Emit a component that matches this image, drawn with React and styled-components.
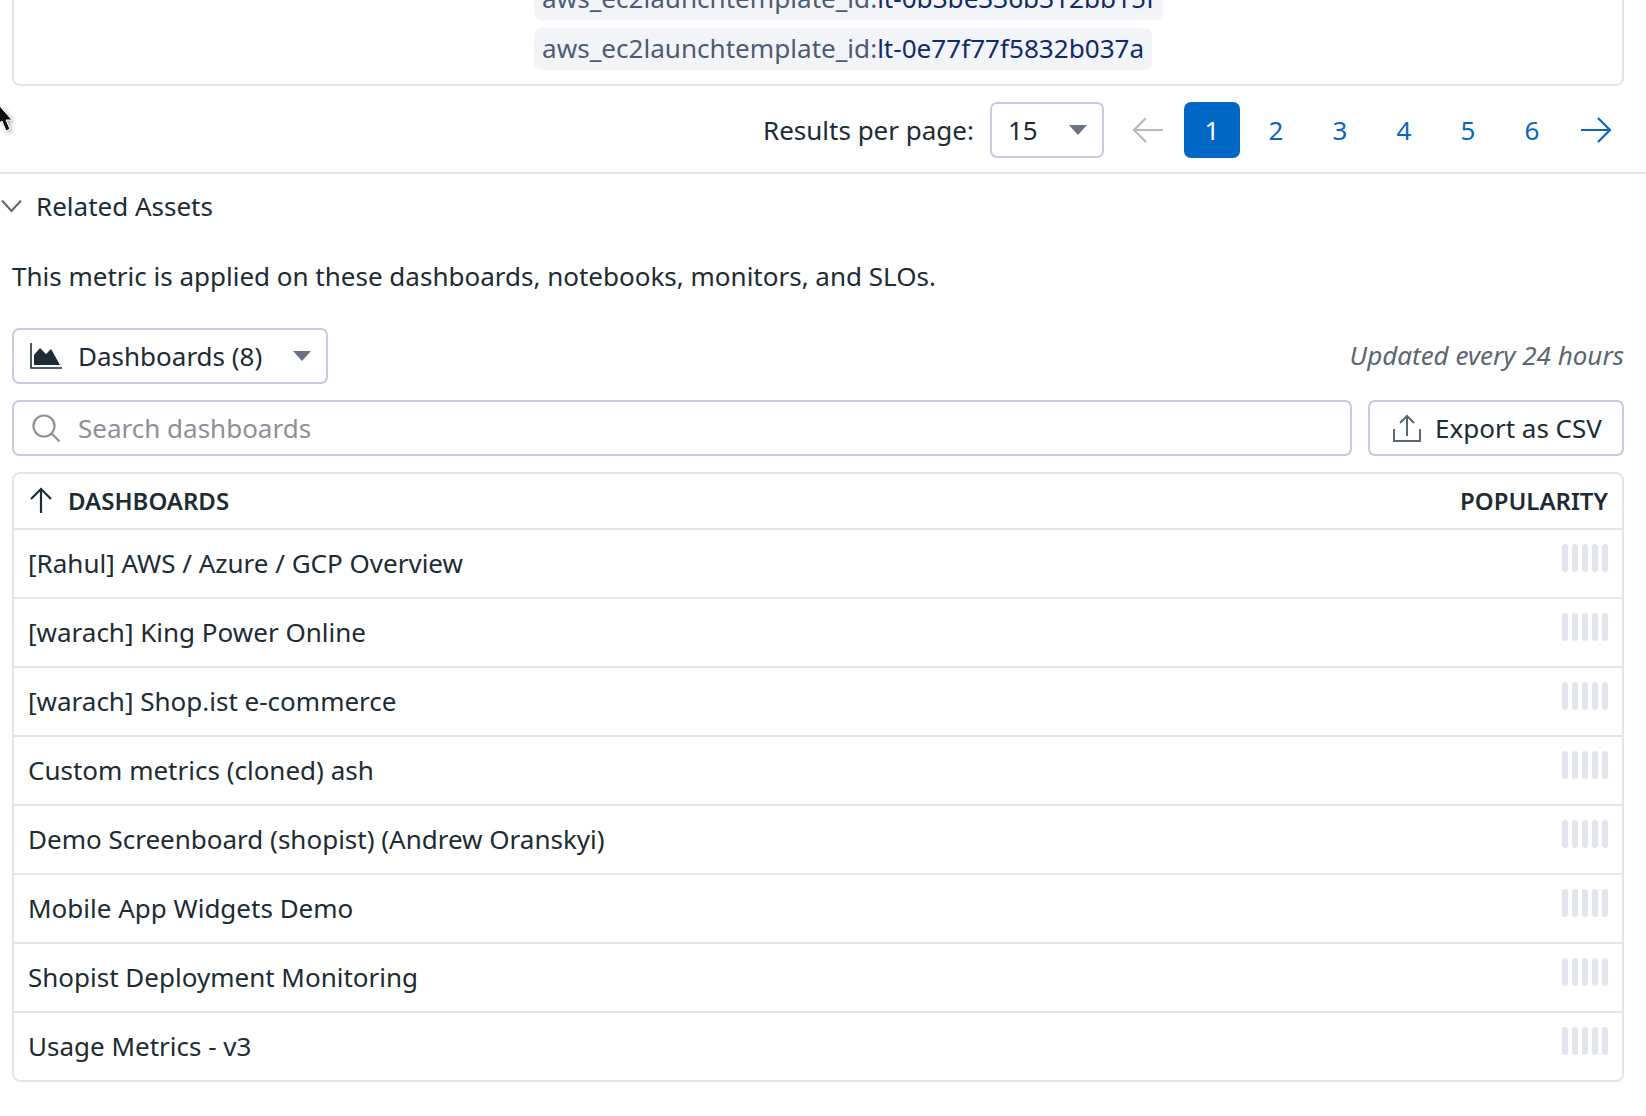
import React from "react"
import styled, { createGlobalStyle } from "styled-components"

const GlobalStyle = createGlobalStyle`
  html, body {
    margin: 0;
    padding: 0;
    background: #fff;
    overflow: hidden;
  }
  body {
    font-family: "Noto Sans", "Open Sans", sans-serif;
    color: #1c2b34;
    font-size: 26px;
  }
`
const Page = styled.div`
  position: relative;
  width: 1646px;
  height: 1116px;
  overflow: hidden;
`
const TagCard = styled.div`
  box-sizing: border-box;
  height: 116px;
  margin: -30px 22px 0 12px;
  padding: 0 0 14px 520px;
  border: 2px solid #e2e5ed;
  border-top: 0;
  border-radius: 0 0 8px 8px;
  display: flex;
  flex-direction: column;
  justify-content: flex-end;
  align-items: flex-start;
  gap: 8px;
`
const Chip = styled.div`
  box-sizing: border-box;
  flex-shrink: 0;
  height: 42px;
  padding: 0 8px 2px;
  display: flex;
  align-items: center;
  background: #f3f4f7;
  border-radius: 7px;
  font-size: 26.1px;
  white-space: nowrap;
  color: #4f5b73;

  b {
    font-weight: 400;
    color: #12296b;
  }
`
const Pagination = styled.div`
  height: 88px;
  padding: 16px 22px 0 0;
  box-sizing: border-box;
  display: flex;
  align-items: flex-start;
  justify-content: flex-end;
  border-bottom: 2px solid #e2e5ed;
`
const PerPage = styled.span`
  line-height: 56px;
  margin-right: 16px;
`
const SelectBox = styled.div`
  box-sizing: border-box;
  height: 56px;
  display: flex;
  align-items: center;
  gap: 16px;
  padding: 0 15px 0 16px;
  border: 2px solid #c7cbdf;
  border-radius: 7px;
  background: #fff;
`
const PageSize = styled(SelectBox)`
  width: 114px;
`
const Caret = styled.span`
  width: 0;
  height: 0;
  margin-left: auto;
  border-left: 9px solid transparent;
  border-right: 9px solid transparent;
  border-top: 10px solid #6b7280;
`
const Pages = styled.div`
  display: flex;
  align-items: center;
  margin-left: 8px;
`
const PageItem = styled.div`
  width: 56px;
  height: 56px;
  margin-left: 8px;
  display: flex;
  align-items: center;
  justify-content: center;
  border-radius: 7px;
  color: ${props => (props.$active ? "#fff" : "#0a66bd")};
  background: ${props => (props.$active ? "#0068c4" : "transparent")};
`
const Section = styled.section`
  padding: 0 22px 0 12px;
`
const SectionHead = styled.div`
  height: 64px;
  margin-left: -12px;
  display: flex;
  align-items: center;
  gap: 13px;
`
const Description = styled.p`
  margin: 0;
  padding-top: 20px;
  line-height: 37px;
`
const SwitchRow = styled.div`
  margin-top: 33px;
  display: flex;
  align-items: center;
  justify-content: space-between;
`
const TypeSelect = styled(SelectBox)`
  width: 316px;
`
const Updated = styled.span`
  margin-bottom: 2px;
  font-style: italic;
  color: #5c6670;
`
const SearchRow = styled.div`
  margin-top: 16px;
  display: flex;
  gap: 16px;
`
const SearchBox = styled(SelectBox)`
  flex: 1;
  padding-left: 17px;
  gap: 17px;
  color: #8b9197;
`
const ExportButton = styled(SelectBox)`
  width: 256px;
  padding-left: 23px;
  gap: 14px;
`
const Table = styled.div`
  margin-top: 16px;
  border: 2px solid #e2e5ed;
  border-radius: 8px;
`
const HeadRow = styled.div`
  box-sizing: border-box;
  height: 54px;
  padding: 0 14px 2px 15px;
  display: flex;
  align-items: center;
  justify-content: space-between;
  font-size: 24px;
  font-weight: 600;
`
const HeadCell = styled.div`
  display: flex;
  align-items: center;
  gap: 15px;
`
const Row = styled.div`
  box-sizing: border-box;
  height: 69px;
  padding: 0 14px 2px;
  display: flex;
  align-items: center;
  justify-content: space-between;
  border-top: 2px solid #e2e5ed;
`
const Bars = styled.div`
  display: flex;
  gap: 4px;
  margin-top: -10px;
`
const Bar = styled.span`
  width: 6px;
  height: 28px;
  border-radius: 3px;
  background: #e2e5ed;
`
const Cursor = styled.svg`
  position: absolute;
  left: 0;
  top: 104px;
  filter: drop-shadow(2px 2px 2px rgba(0, 0, 0, 0.3));
`

const rows = [
  "[Rahul] AWS / Azure / GCP Overview",
  "[warach] King Power Online",
  "[warach] Shop.ist e-commerce",
  "Custom metrics (cloned) ash",
  "Demo Screenboard (shopist) (Andrew Oranskyi)",
  "Mobile App Widgets Demo",
  "Shopist Deployment Monitoring",
  "Usage Metrics - v3",
]

const Arrow = ({ dir, color }) => (
  <svg width="32" height="32" viewBox="0 0 32 32" fill="none" stroke={color} strokeWidth="2.2">
    {dir === "left"
      ? <path d="M31 16H2M14 4L2 16l12 12" />
      : <path d="M1 16h29M18 4l12 12-12 12" />}
  </svg>
)

export default function App() {
  return (
    <Page>
      <GlobalStyle />
      <TagCard>
        <Chip>aws_ec2launchtemplate_id:<b>lt-0b3be336b312bb15f</b></Chip>
        <Chip>aws_ec2launchtemplate_id:<b>lt-0e77f77f5832b037a</b></Chip>
      </TagCard>
      <Pagination>
        <PerPage>Results per page:</PerPage>
        <PageSize>15<Caret /></PageSize>
        <Pages>
          <PageItem><Arrow dir="left" color="#b5b8bd" /></PageItem>
          <PageItem $active>1</PageItem>
          {[2, 3, 4, 5, 6].map(n => <PageItem key={n}>{n}</PageItem>)}
          <PageItem><Arrow dir="right" color="#0a66bd" /></PageItem>
        </Pages>
      </Pagination>
      <Section>
        <SectionHead>
          <svg width="23" height="14" viewBox="0 0 23 14" fill="none" stroke="#5c6670" strokeWidth="2">
            <path d="M2 1.5l9.500 10.500 9.500-10.500" />
          </svg>
          Related Assets
        </SectionHead>
        <Description>This metric is applied on these dashboards, notebooks, monitors, and SLOs.</Description>
        <SwitchRow>
          <TypeSelect>
            <svg width="32" height="26" viewBox="0 0 32 26">
              <path d="M1 0v25h31" fill="none" stroke="#1c2b34" strokeWidth="1.600" />
              <path d="M4 22V12l6-7 6 6 5-5 9 16z" fill="#1c2b34" />
            </svg>
            Dashboards (8)
            <Caret />
          </TypeSelect>
          <Updated>Updated every 24 hours</Updated>
        </SwitchRow>
        <SearchRow>
          <SearchBox>
            <svg width="30" height="30" viewBox="0 0 30 30" fill="none" stroke="#8b9197" strokeWidth="2.200">
              <circle cx="13" cy="13" r="10.500" />
              <path d="M20.500 20.500l8 8" />
            </svg>
            Search dashboards
          </SearchBox>
          <ExportButton>
            <svg width="28" height="28" viewBox="0 0 28 28" fill="none" stroke="#5c6670" strokeWidth="2">
              <path d="M1 15v12h26V15M14 22V2M7 9l7-7 7 7" />
            </svg>
            Export as CSV
          </ExportButton>
        </SearchRow>
        <Table>
          <HeadRow>
            <HeadCell>
              <svg width="24" height="26" viewBox="0 0 24 26" fill="none" stroke="#1c2b34" strokeWidth="2.200">
                <path d="M12 26V2M2 12L12 2l10 10" />
              </svg>
              DASHBOARDS
            </HeadCell>
            <span>POPULARITY</span>
          </HeadRow>
          {rows.map(name => (
            <Row key={name}>
              {name}
              <Bars>{[0, 1, 2, 3, 4].map(i => <Bar key={i} />)}</Bars>
            </Row>
          ))}
        </Table>
      </Section>
      <Cursor width="14" height="30" viewBox="0 0 14 30">
        <path d="M-2 0L12 16H6l4 9-4 2-4-10-4 3z" fill="#111" stroke="#fff" strokeWidth="1" />
      </Cursor>
    </Page>
  )
}
